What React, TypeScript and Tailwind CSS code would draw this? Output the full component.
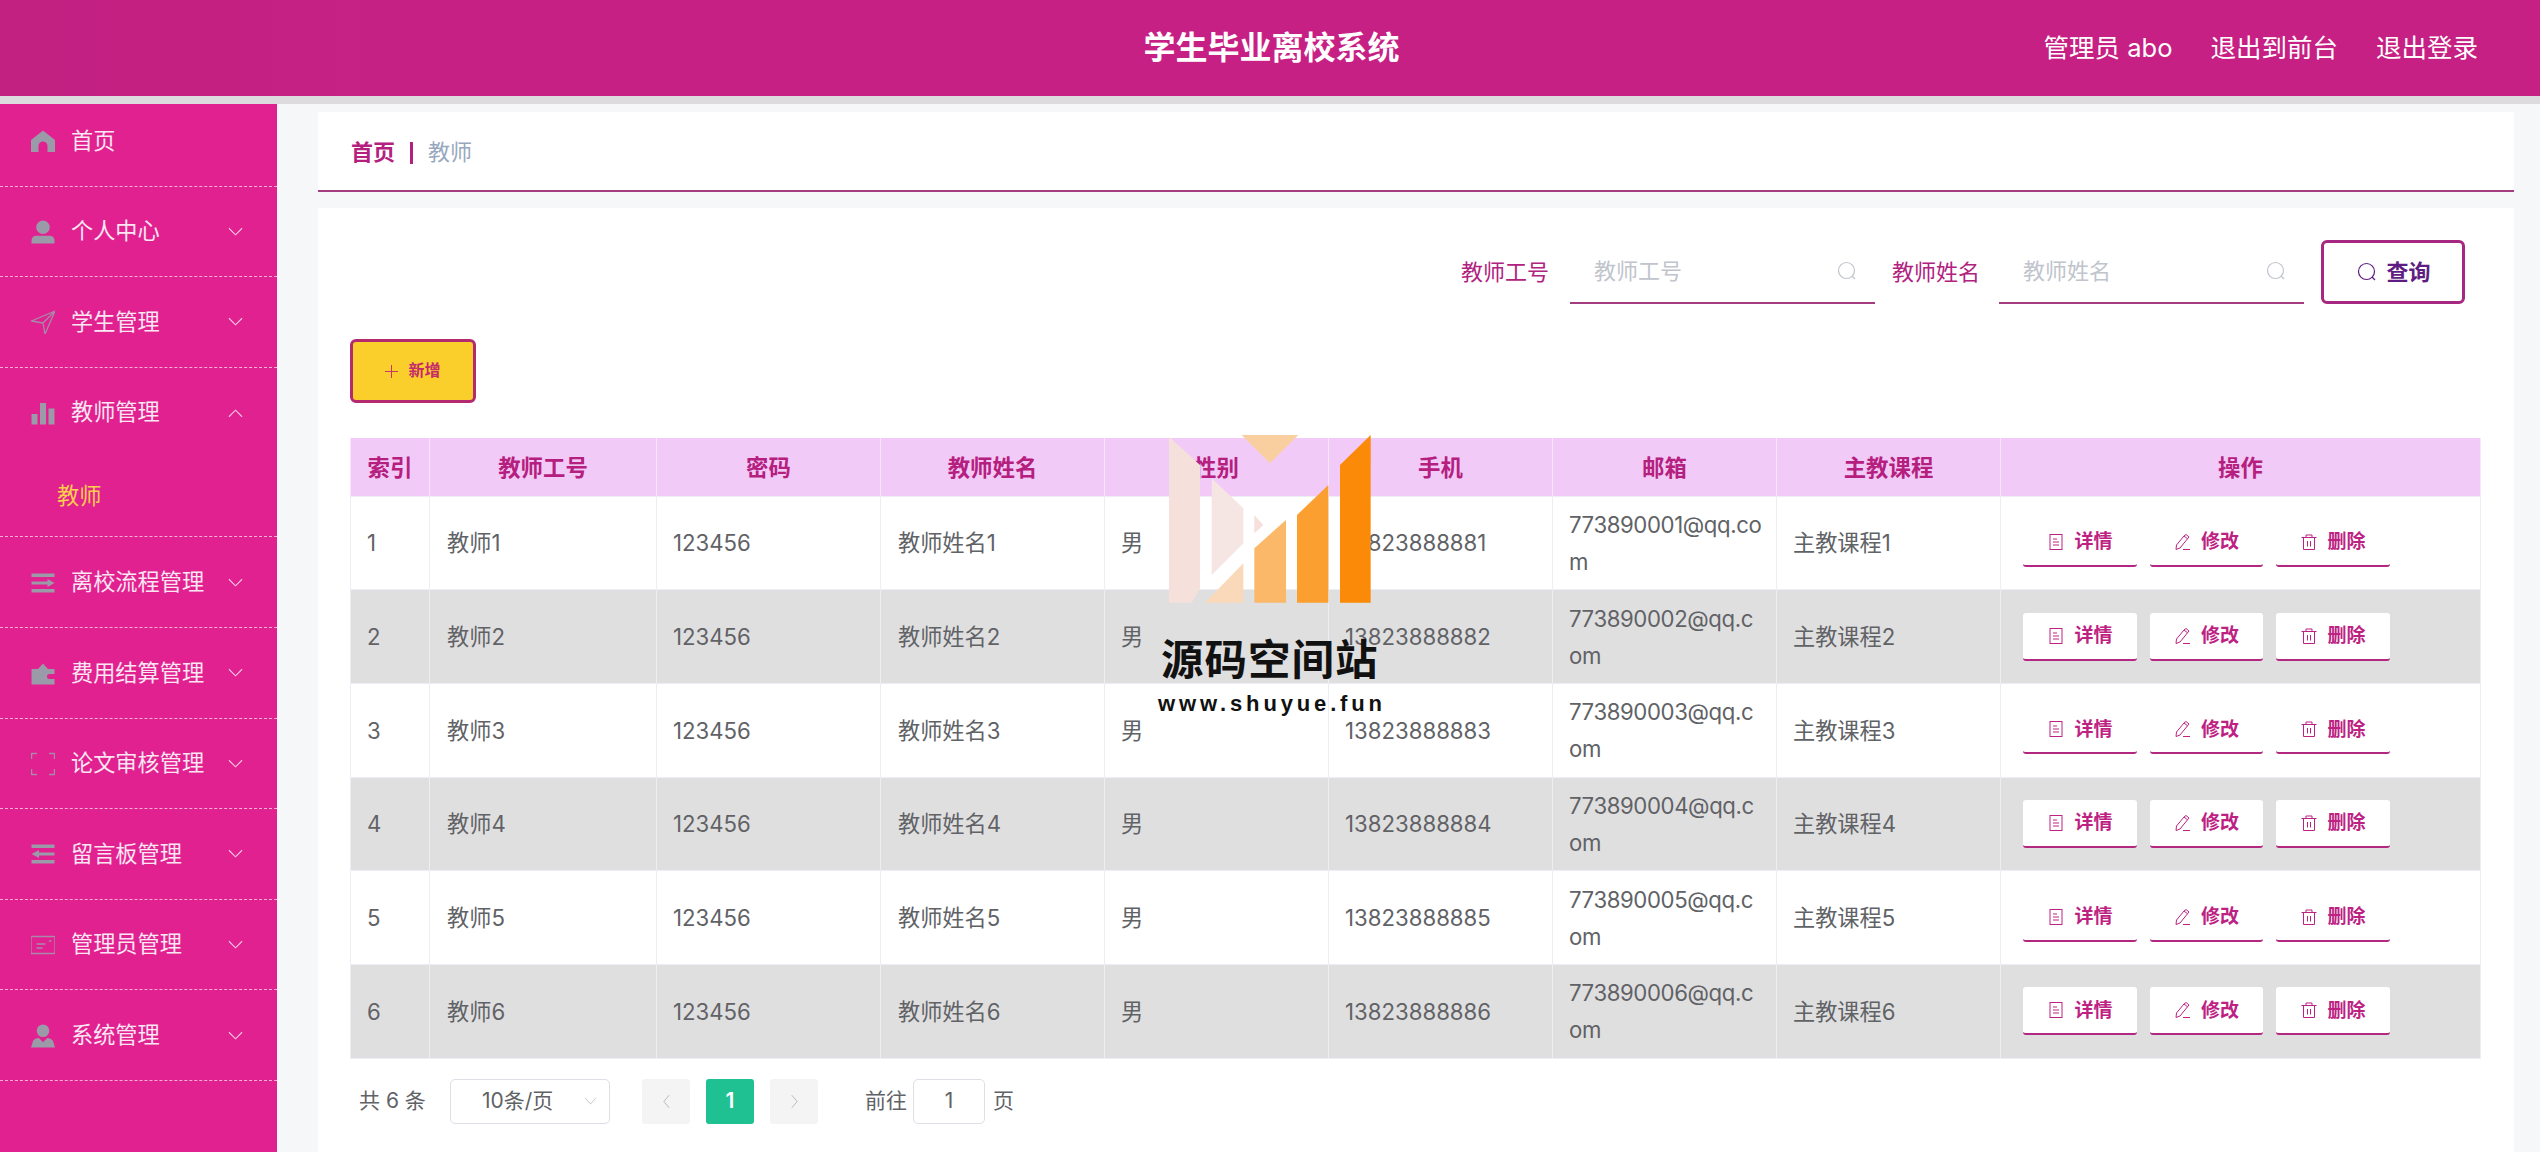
import React from "react";

const Ic = ({ children, className }: { children: React.ReactNode; className?: string }) => (
  <svg viewBox="0 0 24 24" className={className}>{children}</svg>
);

const navIcons: Record<string, React.ReactNode> = {
  home: <path fill="#9a9aa8" d="M12 1.500 L24 11 V23 H16.500 V17 A4.500 4.500 0 0 0 7.500 17 V23 H0 V11 Z" />,
  user: <path fill="#9a9aa8" d="M12 0.500a6.800 6.800 0 1 1 0 13.600a6.800 6.800 0 0 1 0-13.600Z M0.500 20.500c0-3 2-4.800 5-4.800h13c3 0 5 1.800 5 4.800v3H0.500Z" />,
  plane: <path fill="none" stroke="#a889a8" strokeWidth="1.300" strokeLinejoin="round" d="M24 1 L0.500 11 L12 13 L14 24 Z M24 1 L12 13" />,
  chart: <path fill="#9a9aa8" d="M0.500 13h6v10.500h-6Z M9 2h6v21.500H9Z M17.500 7.500h6v16h-6Z" />,
  unfold: <path fill="#9a9aa8" d="M0.500 2.500h23v3.500h-23Z M0.500 10.500h16V8l7 4-7 4v-2.500h-16Z M0.500 18h23v3.500h-23Z" />,
  wallet: <path fill="#9a9aa8" d="M0.500 8h6.500l5-5.500 5 5.500h6.500v5h-5a2.500 2.500 0 0 0 0 5h5v5.500h-23Z" />,
  full: <path fill="none" stroke="#a889a8" strokeWidth="1.500" d="M0.500 7V1.500h5.500 M18 1.500h5.500V7 M0.500 17v5.500h5.500 M18 22.500h5.500V17" />,
  fold: <path fill="#9a9aa8" d="M0.500 2.500h23v3.500h-23Z M23.500 10.500H8V8l-7.500 4 7.500 4v-2.500h15.500Z M0.500 18h23v3.500h-23Z" />,
  card: <path fill="none" stroke="#a889a8" strokeWidth="1.300" d="M0 4.500a1 1 0 0 1 1-1h22a1 1 0 0 1 1 1v15a1 1 0 0 1-1 1H1a1 1 0 0 1-1-1Z M5.500 11h9 M5.500 15h6 M18 8h2.500" />,
  admin: <path fill="#9a9aa8" d="M12 0.500a6.300 6.300 0 1 1 0 12.600a6.300 6.300 0 0 1 0-12.600Z M0 23.500l2-6.500c.5-1.500 3-3 5.800-3l4.200 4.200 4.200-4.200c2.800 0 5.300 1.500 5.800 3l2 6.500Z" />,
};

const Chev = ({ up }: { up?: boolean }) => (
  <svg viewBox="0 0 16 10" className="w-[15px] h-[10px] shrink-0">
    <path d={up ? "M1 9 L8 2 L15 9" : "M1 1 L8 8 L15 1"} fill="none" stroke="#f5c6e4" strokeWidth="1.200" />
  </svg>
);

const nav = [
  { icon: "home", label: "首页", noChev: true },
  { icon: "user", label: "个人中心" },
  { icon: "plane", label: "学生管理" },
  { icon: "chart", label: "教师管理", open: true },
  { icon: "unfold", label: "离校流程管理" },
  { icon: "wallet", label: "费用结算管理" },
  { icon: "full", label: "论文审核管理" },
  { icon: "fold", label: "留言板管理" },
  { icon: "card", label: "管理员管理" },
  { icon: "admin", label: "系统管理" },
];

const Sidebar = () => (
  <aside className="w-[277px] shrink-0 bg-[#e12190] min-h-[1048px]">
    {nav.map((n, i) => (
      <div key={n.label} className="border-b border-dashed border-[#f9b0d4]">
        <div className={`${i === 0 ? "h-[81.600px] pb-[7px]" : "h-[89.600px] pt-[1px]"} flex items-center pl-[31px] pr-[34px] text-[22.200px] text-[#fbe6f3]`}>
          <Ic className="w-[24px] h-[24px] shrink-0">{navIcons[n.icon]}</Ic>
          <span className="ml-[16px] flex-1 whitespace-nowrap">{n.label}</span>
          {!n.noChev && <Chev up={n.open} />}
        </div>
        {n.open && (
          <div className="h-[79px] flex items-center pl-[57px] text-[22.200px] text-[#fdcf4a]">教师</div>
        )}
      </div>
    ))}
  </aside>
);

const Search = ({ className }: { className?: string }) => (
  <svg viewBox="0 0 20 20" className={className}>
    <circle cx="9.500" cy="9.500" r="8" fill="none" stroke="currentColor" strokeWidth="1.200" />
    <path d="M15 15 L18 18" stroke="currentColor" strokeWidth="1.200" />
  </svg>
);

const SearchField = ({ label, gap }: { label: string; gap: string }) => (
  <div className="flex items-center">
    <span className="text-[22px] leading-none pt-[2px] text-[#b1227f] whitespace-nowrap">{label}</span>
    <div className={`${gap} w-[305px] h-[64px] border-b-2 border-[#a43d80] flex items-center justify-between pl-[24px] pr-[18px]`}>
      <span className="text-[22px] text-[#c0c4cc]">{label}</span>
      <Search className="w-[20px] h-[20px] text-[#c0c4cc]" />
    </div>
  </div>
);

const iconStroke = { fill: "none", stroke: "currentColor", strokeWidth: 1 };

const Actions = () => {
  const items: [string, string, React.ReactNode][] = [
    ["w-[114px]", "详情", <g {...iconStroke}><rect x="3" y="1.500" width="12" height="15" /><path d="M6 6h4 M6 9h6 M6 12h6" /></g>],
    ["w-[113px]", "修改", <g {...iconStroke}><path d="M2 16.500 L2.500 12 L10 3 L13.500 5.800 L6 15 Z M10 3 L12 1.500 L15 4 L13.500 5.800 M9 16.500h7" /></g>],
    ["w-[114px]", "删除", <g {...iconStroke}><path d="M3.500 5v11.500h11V5 M1.500 4.500h15 M6 4.500V2h6v2.500 M7.500 8v5.500 M10.500 8v5.500" /></g>],
  ];
  return (
    <div className="flex gap-[13px] pl-[22px]">
      {items.map(([w, t, ic]) => (
        <div key={t} className={`${w} h-[48px] bg-white rounded-[3px] border-b-2 border-[#b2277f] flex items-center justify-center gap-[9px] text-[19px] font-semibold text-[#bd2283]`}>
          <svg viewBox="0 0 18 18" className="w-[18px] h-[18px]">{ic}</svg>
          <span>{t}</span>
        </div>
      ))}
    </div>
  );
};

const cols = ["w-[79px]", "w-[227px]", "w-[224px]", "w-[224px]", "w-[224px]", "w-[224px]", "w-[224px]", "w-[224px]", "w-[480px]"];
const heads = ["索引", "教师工号", "密码", "教师姓名", "性别", "手机", "邮箱", "主教课程", "操作"];

const Table = () => {
  const rows = [1, 2, 3, 4, 5, 6];
  return (
    <table className="table-fixed border-collapse w-[2130px] mt-[35px] font-['Inter','Noto_Sans_CJK_SC',sans-serif]">
      <colgroup>
        {cols.map((c, i) => <col key={i} className={c} />)}
      </colgroup>
      <thead>
        <tr className="h-[58px] bg-[#f2caf8]">
          {heads.map((h) => (
            <th key={h} className="border-x border-[#f8e6fb] text-center text-[22.400px] font-bold text-[#b5207f] p-0 pt-[3px]">{h}</th>
          ))}
        </tr>
      </thead>
      <tbody>
        {rows.map((i) => (
          <tr key={i} className={`h-[93.700px] text-[22.200px] leading-[37px] text-[#606266] ${i % 2 ? "bg-white" : "bg-[#e0dfe0]"}`}>
            <td className="border border-[#ebeef5] px-[16px]">{i}</td>
            <td className="border border-[#ebeef5] px-[17px]">教师{i}</td>
            <td className="border border-[#ebeef5] px-[16px]">123456</td>
            <td className="border border-[#ebeef5] px-[17px]">教师姓名{i}</td>
            <td className="border border-[#ebeef5] px-[16px]">男</td>
            <td className="border border-[#ebeef5] px-[16px]">1382388888{i}</td>
            <td className="border border-[#ebeef5] px-[16px] tracking-[-0.400px]">
              {i === 1 ? <>773890001@qq.co<br />m</> : <>77389000{i}@qq.c<br />om</>}
            </td>
            <td className="border border-[#ebeef5] px-[16px]">主教课程{i}</td>
            <td className="border border-[#ebeef5] p-0"><Actions /></td>
          </tr>
        ))}
      </tbody>
    </table>
  );
};

const PageBtn = ({ dir }: { dir: "l" | "r" }) => (
  <div className="w-[48px] h-[45px] bg-[#f4f4f5] rounded-[3px] flex items-center justify-center">
    <svg viewBox="0 0 10 16" className="w-[9px] h-[15px]">
      <path d={dir === "l" ? "M8 1 L2 8 L8 15" : "M2 1 L8 8 L2 15"} fill="none" stroke="#b0b3b8" strokeWidth="1" />
    </svg>
  </div>
);

const Pagination = () => (
  <div className="flex items-center mt-[20px] h-[45px] text-[21px] text-[#606266] pl-[9px] font-['Inter','Noto_Sans_CJK_SC',sans-serif]">
    <span className="whitespace-nowrap w-[91px]">共 6 条</span>
    <div className="w-[160px] h-[45px] rounded-[5px] border border-[#dcdfe6] flex items-center justify-between pl-[31px] pr-[12px]">
      <span className="whitespace-nowrap">10条/页</span>
      <svg viewBox="0 0 14 9" className="w-[13px] h-[8px]"><path d="M1 1 L7 8 L13 1" fill="none" stroke="#c0c4cc" strokeWidth="1" /></svg>
    </div>
    <div className="flex ml-[32px] gap-[16px]">
      <PageBtn dir="l" />
      <div className="w-[48px] h-[45px] bg-[#1fc092] rounded-[3px] flex items-center justify-center text-white font-semibold">1</div>
      <PageBtn dir="r" />
    </div>
    <span className="ml-[47px] whitespace-nowrap">前往</span>
    <div className="ml-[6px] w-[72px] h-[45px] rounded-[5px] border border-[#dcdfe6] flex items-center justify-center">1</div>
    <span className="ml-[8px]">页</span>
  </div>
);

const Watermark = () => (
  <svg viewBox="0 0 720 540" className="absolute left-[1150px] top-[430px] w-[240px] h-[180px] pointer-events-none">
    <g transform="translate(-150 -30)">
      <polygon points="207,50 300,135 300,505 275,548 207,548" fill="#f5e0dc" />
      <polygon points="335,175 430,265 430,370 335,465" fill="#f5e5e3" />
      <polygon points="315,548 430,430 430,548" fill="#f9d9b9" />
      <polygon points="463,285 490,315 463,340" fill="#f5e0dc" />
      <polygon points="463,385 558,300 558,548 463,548" fill="#fbb868" />
      <polygon points="591,285 685,195 685,548 591,548" fill="#fb9f30" />
      <polygon points="720,135 812,45 812,548 720,548" fill="#fb8a08" />
      <polygon points="425,45 595,45 510,130" fill="#f9cfa0" />
    </g>
  </svg>
);

export default function App() {
  return (
    <div className="relative w-[2540px] h-[1152px] overflow-hidden bg-[#f6f7f9] font-['Liberation_Sans','Noto_Sans_CJK_SC',sans-serif]">
      <header className="h-[96px] bg-gradient-to-r from-[#c22182] to-[#c72084] to-[20%] text-white grid grid-cols-[1fr_auto_1fr] items-center">
        <div />
        <h1 className="text-[32px] font-bold pl-[3px]">学生毕业离校系统</h1>
        <div className="flex justify-end gap-[38px] pr-[62px] text-[25.500px] font-['Inter','Noto_Sans_CJK_SC',sans-serif]">
          <span>管理员 abo</span>
          <span>退出到前台</span>
          <span>退出登录</span>
        </div>
      </header>
      <div className="h-[8px] bg-[#dddbde]" />
      <div className="flex">
        <Sidebar />
        <main className="ml-[41px] w-[2196px] pt-[8px]">
          <div className="h-[80px] bg-white border-b-2 border-[#a43d80] flex items-center pl-[33px] pt-[3px] text-[22px]">
            <span className="font-bold text-[#b5207f]">首页</span>
            <div className="mx-[15px] w-[3px] h-[22px] bg-[#b5207f]" />
            <span className="text-[#97a8be]">教师</span>
          </div>
          <div className="mt-[16px] bg-white h-[944px] pl-[32px] pt-[32px]">
            <div className="flex justify-end items-start gap-[17px] pr-[49px]">
              <SearchField label="教师工号" gap="ml-[21px]" />
              <SearchField label="教师姓名" gap="ml-[19px]" />
              <div className="w-[144px] h-[64px] border-[3px] border-[#a62880] rounded-[6px] flex items-center justify-center gap-[9px] pl-[2px] text-[22px] font-bold text-[#5f1c82]">
                <Search className="w-[20px] h-[20px]" />
                <span>查询</span>
              </div>
            </div>
            <div className="mt-[35px] w-[126px] h-[64px] bg-[#fbcf2b] border-[3px] border-[#b42a70] rounded-[6px] flex items-center justify-center gap-[10px] text-[16px] font-bold text-[#c62a6c]">
              <svg viewBox="0 0 14 14" className="w-[13px] h-[13px]"><path d="M7 0v14M0 7h14" stroke="currentColor" strokeWidth="1" /></svg>
              <span>新增</span>
            </div>
            <Table />
            <Pagination />
          </div>
        </main>
      </div>
      <Watermark />
      <div className="absolute left-[1161px] top-[631px] text-[42.500px] leading-[60px] tracking-[1px] font-bold text-[#111]">源码空间站</div>
      <div className="absolute left-[1158px] top-[689px] text-[22px] leading-[30px] tracking-[3.850px] font-bold text-[#111] whitespace-nowrap">www.shuyue.fun</div>
    </div>
  );
}
